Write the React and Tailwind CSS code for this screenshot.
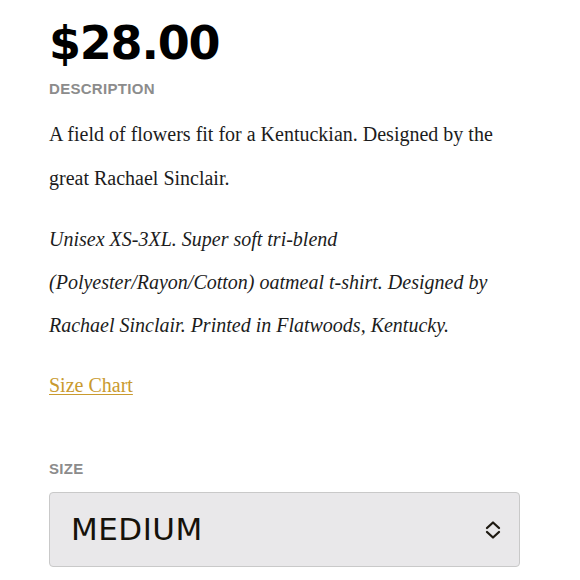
import React, { useState } from "react";

const Chevrons = () => (
  <svg width="16" height="20" viewBox="0 0 16 20" fill="none" stroke="#1e1a12" strokeWidth="2.3" strokeLinecap="round" strokeLinejoin="round">
    <path d="M2 8 L8 2.5 L14 8" />
    <path d="M2 12 L8 17.5 L14 12" />
  </svg>
);

export default function App() {
  const [size, setSize] = useState("MEDIUM");

  return (
    <div className="w-[580px] h-[580px] bg-white overflow-hidden pl-[49px] pt-[20px]">
      <div
        className="text-[46px] leading-[46px] font-bold text-black tracking-[-1.2px]"
        style={{ fontFamily: '"DejaVu Sans", sans-serif' }}
      >
        $28.00
      </div>

      <div
        className="mt-[14px] text-[15px] leading-[18px] font-bold tracking-[0.3px] text-[#8c8c8c]"
        style={{ fontFamily: '"Liberation Sans", Arial, sans-serif' }}
      >
        DESCRIPTION
      </div>

      <div
        className="w-[470px] text-[20px] leading-[44px] text-[#1c1c1c]"
        style={{ fontFamily: '"Liberation Serif", serif' }}
      >
        <p className="mt-[14px]">
          A field of flowers fit for a Kentuckian. Designed by the great Rachael Sinclair.
        </p>
        <p className="mt-[18px] italic leading-[43px]">
          Unisex XS-3XL. Super soft tri-blend (Polyester/Rayon/Cotton) oatmeal t-shirt. Designed by Rachael Sinclair. Printed in Flatwoods, Kentucky.
        </p>
        <p className="mt-[16px]">
          <a href="#" className="text-[#c99a2e] underline underline-offset-[2px] decoration-1">
            Size Chart
          </a>
        </p>
      </div>

      <div
        className="mt-[53px] text-[15px] leading-[18px] font-bold tracking-[0.3px] text-[#8c8c8c]"
        style={{ fontFamily: '"Liberation Sans", Arial, sans-serif' }}
      >
        SIZE
      </div>

      <button
        type="button"
        onClick={() => setSize(size)}
        className="mt-[14px] w-[471px] h-[75px] flex items-center justify-between pl-[21px] pr-[18px] bg-[#e9e8ea] border border-[#c9c9c9] rounded-[4px]"
      >
        <span
          className="text-[31px] leading-none text-[#16120a] tracking-[0.5px]"
          style={{ fontFamily: '"DejaVu Sans", sans-serif' }}
        >
          {size}
        </span>
        <Chevrons />
      </button>
    </div>
  );
}
